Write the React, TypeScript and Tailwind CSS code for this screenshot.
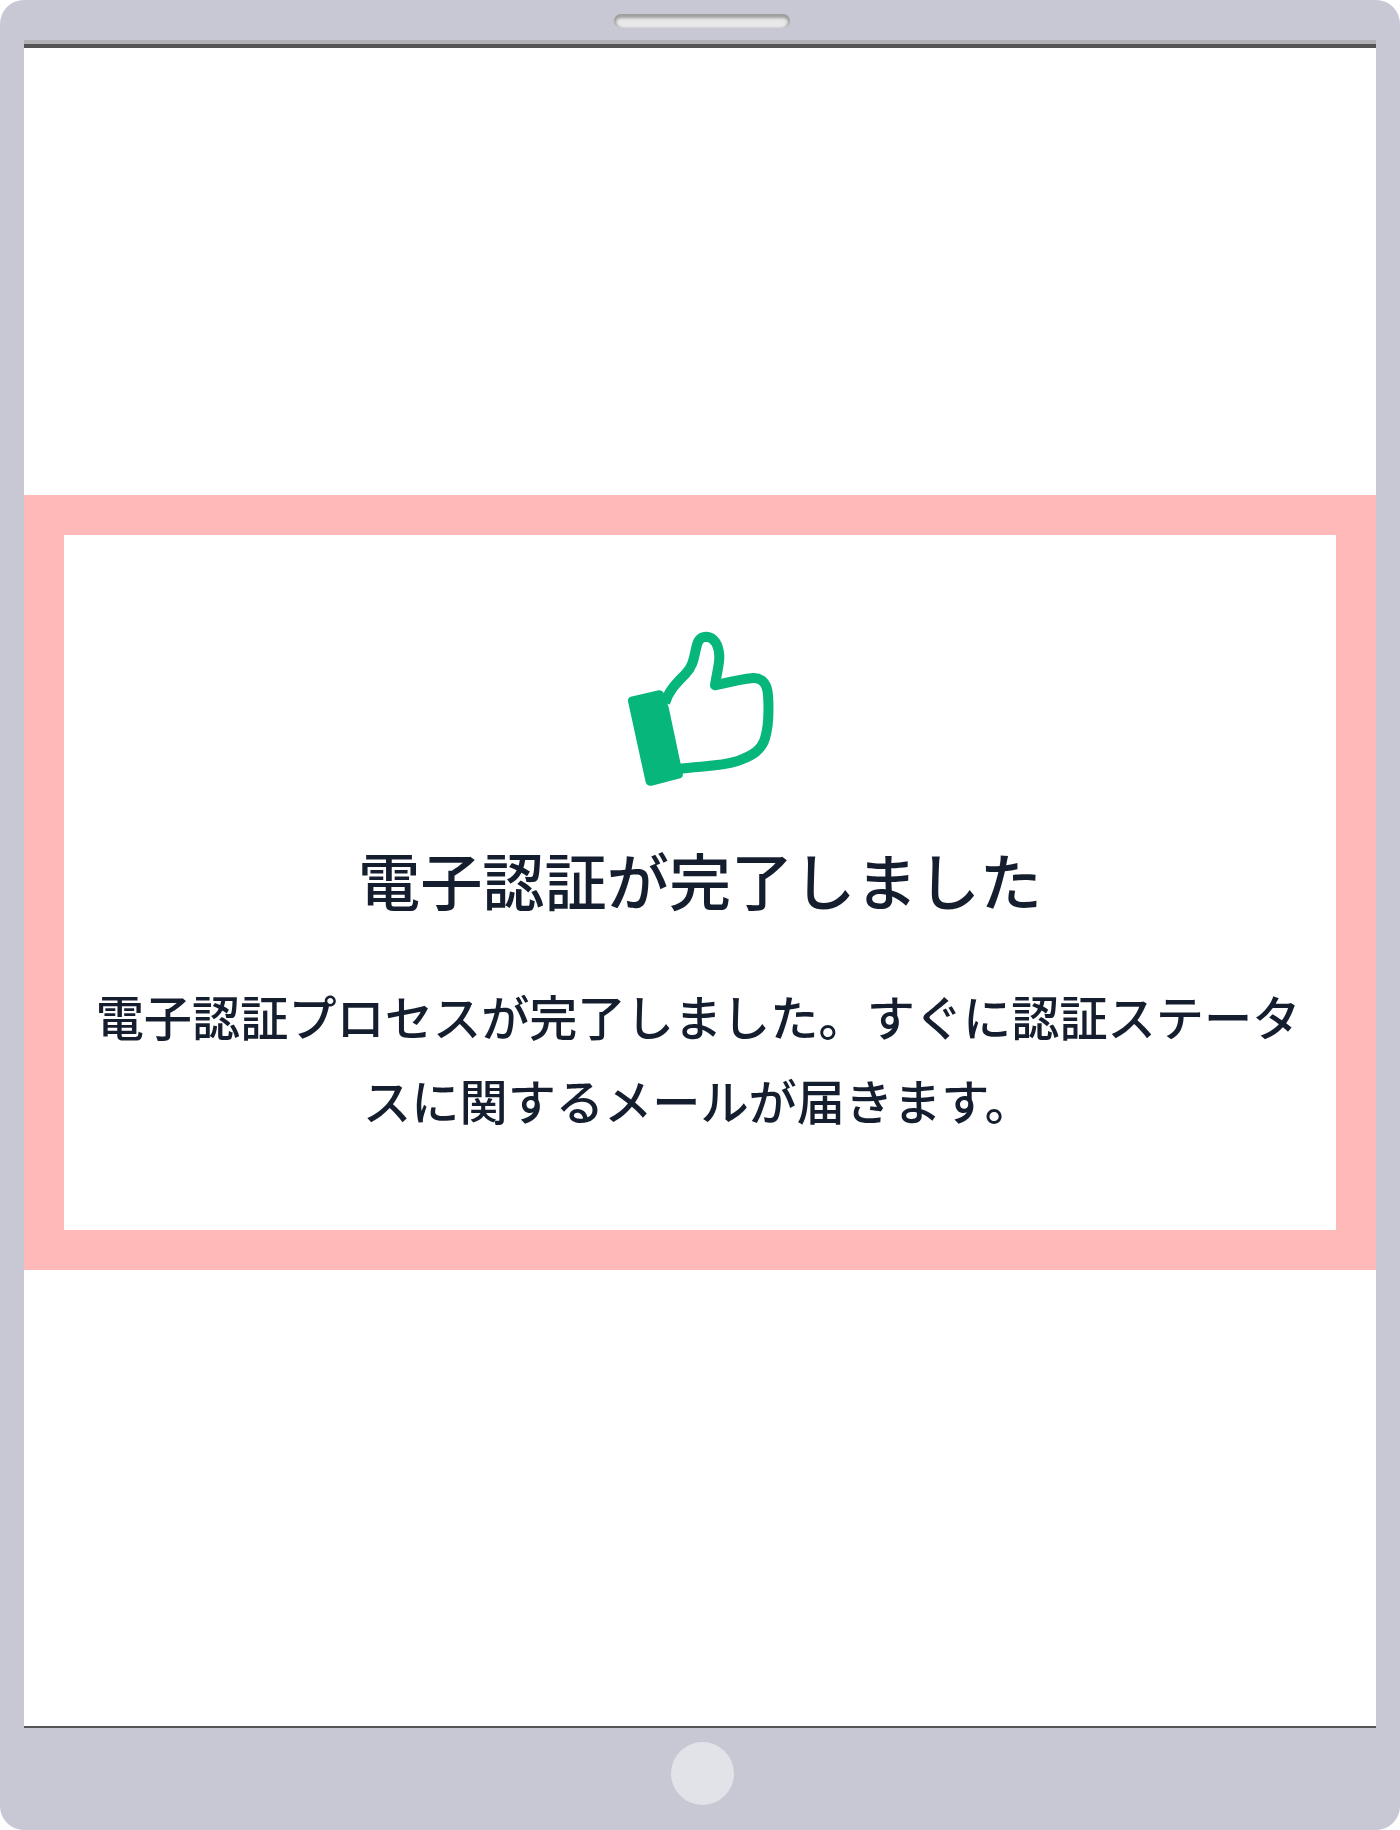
export default function App() {
  return (
    <div className="flex h-[1830px] w-[1400px] flex-col overflow-hidden bg-white font-['Noto_Sans_CJK_JP','Noto_Sans',sans-serif] text-[#151e2e]">
      <div className="flex h-full flex-col rounded-[24px] bg-[#c8c8d5]">
        {/* Top bezel with speaker */}
        <div className="flex h-[44px] shrink-0 justify-center pl-[4px] pt-[14px]">
          <div className="h-[14px] w-[176px] rounded-full bg-[#e8e8e8] shadow-[inset_0_5px_3px_-1px_#9e9e9e,inset_3px_0_3px_-1px_#a8a8a8,inset_-3px_0_3px_-1px_#a8a8a8]" />
        </div>

        {/* Screen */}
        <div className="mx-[24px] flex flex-1 flex-col border-b-2 border-t-4 border-b-[#555558] border-t-[#555555] bg-white shadow-[0_-4px_0_#b0b0b5]">
          <div className="mt-[447px] border-[40px] border-[#ffb9b9] bg-white">
            <div className="flex h-[695px] flex-col items-center pt-[75px]">
              <svg width="200" height="200" viewBox="0 0 600 600" fill="none">
                <path
                  d="M195 280C205 240 235 215 258 190C280 168 282 140 289 112C293 90 302 80 320 80C342 81 357 105 358 140C358 165 350 190 345 226C380 218 420 208 460 204C488 203 502 225 504 255C507 300 507 345 495 385C484 420 460 436 410 454C360 470 300 468 235 477"
                  stroke="#06b67a"
                  strokeWidth="30"
                  strokeLinejoin="round"
                />
                <path
                  d="M92 260L176 241C183 240 188 243 191 249L206 292L248 490C250 497 247 503 241 505L155 527C146 529 140 525 137 517L84 274C83 267 86 262 92 260Z"
                  fill="#06b67a"
                />
              </svg>
              <h1 className="mt-[37px] text-center text-[62.2px] font-medium leading-[64px]">電子認証が完了しました</h1>
              <p className="mt-[62px] w-[1210px] pr-[4px] text-center text-[48.2px] font-medium leading-[84px]">
                電子認証プロセスが完了しました。すぐに認証ステータスに関するメールが届きます。
              </p>
            </div>
          </div>
        </div>

        {/* Bottom bezel with home button */}
        <div className="flex flex-1 grow-0 basis-[102px] justify-center pl-[4px] pt-[14px]">
          <div className="h-[63px] w-[63px] rounded-full bg-[#e2e3e9]" />
        </div>
      </div>
    </div>
  );
}
